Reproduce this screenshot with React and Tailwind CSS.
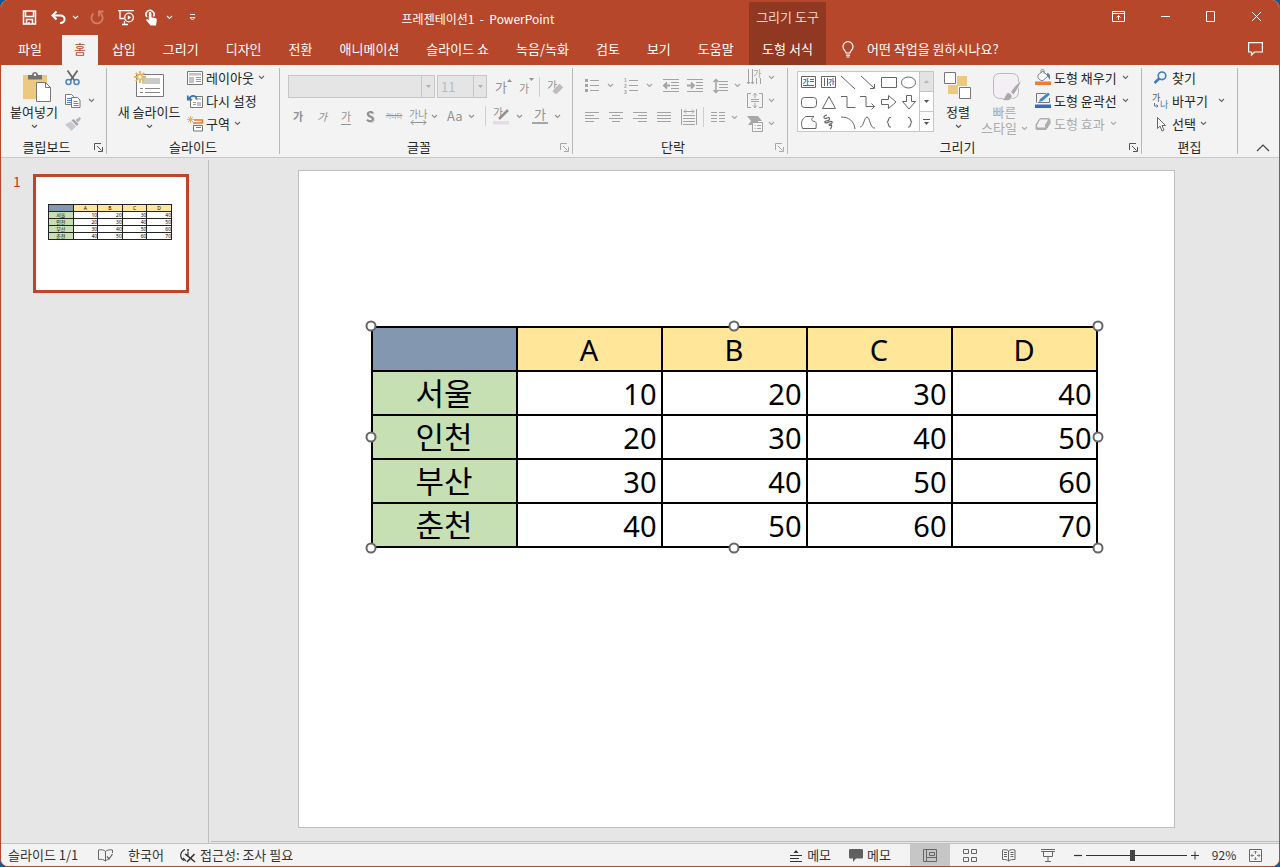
import React from "react";

/* ---------- small drawing helpers ---------- */

function Svg({ w, h, color = "currentColor", sw = 1, className = "", children }) {
  return (
    <svg
      width={w}
      height={h}
      viewBox={`0 0 ${w} ${h}`}
      fill="none"
      stroke={color}
      strokeWidth={sw}
      className={`shrink-0 overflow-visible ${className}`}
      aria-hidden="true"
    >
      {children}
    </svg>
  );
}

const Chevron = ({ className = "" }) => (
  <Svg w={7} h={5} className={className} sw={1.1}>
    <path d="M1 1l2.500 2.500L6 1" />
  </Svg>
);

const Launcher = ({ dim }) => (
  <button
    type="button"
    aria-label="대화 상자 열기"
    className={`flex h-[10px] w-[14px] items-center pl-[2px] ${dim ? "text-[#a8a8a8]" : "text-[#555]"}`}
  >
    <Svg w={9} h={9}>
      <path d="M.5 7V.5H7M3 3l4.500 4.500M8.500 4v4.500H4" />
    </Svg>
  </button>
);

function Group({ label, launcher, dim, className = "", children }) {
  return (
    <section aria-label={label} className="flex">
      <div className={`flex flex-col ${className}`}>
        <div className="flex h-[69px]">{children}</div>
        <div className="flex h-[21px] items-center pt-[3px]">
          <span className="flex-1 text-center text-[13px] leading-[16px]">{label}</span>
          {launcher && <Launcher dim={dim} />}
        </div>
      </div>
      <div className="mt-[2px] h-[86px] w-px bg-[#b8b8b8]" />
    </section>
  );
}

function Tool({ label, className = "", children }) {
  return (
    <button type="button" aria-label={label} className={`flex items-center ${className}`}>
      {children}
    </button>
  );
}

const Separator = ({ className = "" }) => <div className={`h-[20px] w-px bg-[#cfcfcf] ${className}`} />;

/* ---------- title bar ---------- */

function QuickAccess() {
  return (
    <div className="flex h-[34px] w-[206px] items-center pl-[21px] text-white">
      <Tool label="저장" className="w-[29px]">
        <Svg w={15} h={15} sw={1.5}>
          <path d="M1.500 1h12v13h-12zM3.500 1v5.500h8V1" />
          <path d="M4.500 14v-4.500h6V14M7 12v2" />
        </Svg>
      </Tool>
      <Tool label="실행 취소" className="w-[39px] gap-[6px]">
        <Svg w={15} h={15} sw={2}>
          <path d="M5.500 1.500L1.500 5.500l4 4M2 5.500h7.500c5.500 0 5.500 7.500-.5 7.500" />
        </Svg>
        <Chevron />
      </Tool>
      <Tool label="다시 실행" className="w-[28px] text-[#d27f68]">
        <Svg w={14} h={15} sw={1.800}>
          <path d="M4.500 2.800a5.600 5.600 0 1 0 6 .7M5 6.500l0-5L.500 1.500" transform="translate(14 0) scale(-1 1)" />
        </Svg>
      </Tool>
      <Tool label="처음부터" className="w-[27px]">
        <Svg w={17} h={17} sw={1.300}>
          <path d="M0 1.700h16M2 2v7.500h4M6.500 12v3.500M4 15.500h6" />
          <circle cx="11" cy="8.500" r="4.300" />
          <path d="M9.800 6.300v4.400l3.400-2.200z" fill="currentColor" stroke="none" />
        </Svg>
      </Tool>
      <Tool label="터치/마우스 모드" className="w-[44px] gap-[8px]">
        <Svg w={13} h={17}>
          <path d="M2 8a4 4 0 1 1 6.500-.5" strokeWidth="1.600" />
          <path
            d="M3.800 4.500c0-1.900 2.600-1.900 2.600 0V8.300l4.200.9c1 .3 1.400 1 1.200 2l-.8 5.400H5.500L1.500 11.500c-.7-1 .5-1.800 1.300-1.200l1 .9z"
            fill="currentColor"
            stroke="none"
          />
        </Svg>
        <Chevron />
      </Tool>
      <Tool label="빠른 실행 도구 모음 사용자 지정">
        <Svg w={7} h={7}>
          <path d="M1 .5h5M1 3.500l2.500 2.500L6 3.500z" />
        </Svg>
      </Tool>
    </div>
  );
}

const TABS = ["삽입", "그리기", "디자인", "전환", "애니메이션", "슬라이드 쇼", "녹음/녹화", "검토", "보기", "도움말"];

function Header() {
  return (
    <header className="flex h-[65px] bg-[#b7472a] text-[13px] leading-[18px] text-white">
      <div className="flex w-[748px] flex-col justify-between">
        <div className="flex items-center">
          <QuickAccess />
          <h1 className="flex-1 whitespace-pre pt-[3px] text-center text-[12px]">
            프레젠테이션1  -  PowerPoint
          </h1>
        </div>
        <nav className="flex h-[30px] gap-px pl-[4px]">
          <button type="button" className="px-[13px] pb-[2px]">파일</button>
          <button type="button" className="ml-[6px] bg-[#f3f3f3] px-[12px] pb-[2px] text-[#b7472a]">홈</button>
          {TABS.map((t) => (
            <button type="button" key={t} className="whitespace-nowrap px-[13px] pb-[2px]">
              {t}
            </button>
          ))}
        </nav>
      </div>
      <div className="mt-[2px] flex w-[77px] flex-col justify-between bg-[#903822] text-center">
        <span className="pt-[6px] text-[#f6d3c7]">그리기 도구</span>
        <button type="button" className="h-[30px] pb-[2px]">도형 서식</button>
      </div>
      <div className="flex flex-1 flex-col justify-between">
        <div className="flex h-[33px] items-center justify-end pr-[17px]">
          <Tool label="리본 메뉴 표시 옵션">
            <Svg w={13} h={11} className="mr-[35px]">
              <path d="M.5.5h12v10H.5zM.5 2.500h12M6.500 9V4.500M4.500 6.500l2-2 2 2" />
            </Svg>
          </Tool>
          <Tool label="최소화">
            <Svg w={11} h={11} className="mr-[34px]"><path d="M1 5.500h9" /></Svg>
          </Tool>
          <Tool label="최대화">
            <Svg w={11} h={11} className="mr-[35px]"><path d="M1.500.5h8v10h-8z" /></Svg>
          </Tool>
          <Tool label="닫기">
            <Svg w={11} h={11}><path d="M1 1l9 9M10 1l-9 9" /></Svg>
          </Tool>
        </div>
        <div className="flex h-[30px] items-center pb-[2px] pl-[16px] pr-[16px]">
          <Svg w={12} h={17} sw={1.200}>
            <path d="M4 12c0-2-3-3-3-6.300a5 5 0 0 1 10 0C11 9 8 10 8 12zM4 14.200h4M4.500 16h3" />
          </Svg>
          <button type="button" className="ml-[13px] flex-1 text-left">어떤 작업을 원하시나요?</button>
          <Tool label="메모">
            <Svg w={15} h={14} sw={1.200}>
              <path d="M.6.6h13.800v9.400H6.500l-3 3v-3H.6z" />
            </Svg>
          </Tool>
        </div>
      </div>
    </header>
  );
}

/* ---------- ribbon groups ---------- */

function ClipboardGroup() {
  return (
    <Group label="클립보드" launcher className="w-[105px]">
      <button type="button" className="flex w-[66px] flex-col items-center pt-[5px]">
        <Svg w={30} h={31} className="ml-[6px]">
          <path d="M1 4h24v24H1z" fill="#edc87e" stroke="none" />
          <path d="M6 4h4c0-4 6-4 6 0h4v4.500H6z" fill="#737373" stroke="none" />
          <circle cx="13" cy="3.800" r="1.200" fill="#fff" stroke="none" />
          <path d="M14.500 11.500h9l5 5v14h-14z" fill="#fff" stroke="#777" />
          <path d="M23.500 11.500v5h5" stroke="#777" />
        </Svg>
        <span className="mt-px text-[13px] leading-[18px]">붙여넣기</span>
        <Chevron className="mt-[3px] text-[#555]" />
      </button>
      <div className="-ml-[2px] flex flex-col text-[#777]">
        <Tool label="잘라내기" className="h-[23px]">
          <Svg w={15} h={16} sw={1.800}>
            <path d="M2.500.5l7 10M12.500.5l-7 10" stroke="#666" />
            <circle cx="3.500" cy="12" r="2.500" stroke="#4a86c5" strokeWidth="1.500" />
            <circle cx="11.500" cy="12" r="2.500" stroke="#4a86c5" strokeWidth="1.500" />
          </Svg>
        </Tool>
        <Tool label="복사" className="h-[23px] gap-[7px]">
          <Svg w={16} h={14} color="#777">
            <path d="M.5.500h6l2 2v8h-8z" fill="#fff" />
            <path d="M2 4.500h4M2 6.500h4M2 8.500h4" stroke="#4a86c5" />
            <path d="M6.500 3.500h6l2.500 2.500v7.500H6.500z" fill="#fff" />
            <path d="M8.500 7.500h4M8.500 9.500h5M8.500 11.500h5" stroke="#4a86c5" />
          </Svg>
          <Chevron />
        </Tool>
        <Tool label="서식 복사" className="h-[23px]">
          <Svg w={16} h={14}>
            <path d="M10.500 3l4-3 1.500 1.500-3 4z" fill="#b3b3b3" stroke="none" />
            <path d="M6.500 3.500l2-1.500 5 5-1.500 2z" fill="#a5a5a5" stroke="none" />
            <path d="M0 7.500l6-3 5 5-4.500 4.500z" fill="#ccc8cf" stroke="none" />
          </Svg>
        </Tool>
      </div>
    </Group>
  );
}

const Spark = () => (
  <g stroke="#e8b458" strokeWidth="1.800">
    <path d="M6 0v12M0 6h12M1.800 1.800l8.400 8.400M10.200 1.800l-8.400 8.400" />
    <circle cx="6" cy="6" r="2.200" fill="#fff" strokeWidth="1" />
  </g>
);

function SlidesGroup() {
  const row = "flex h-[23px] items-center text-[13px] leading-[18px] whitespace-nowrap";
  return (
    <Group label="슬라이드" className="w-[172px]">
      <button type="button" className="flex w-[80px] flex-col items-center whitespace-nowrap pl-[4px] pt-[5px]">
        <Svg w={31} h={28}>
          <path d="M2.500 3.500h27v22h-27z" fill="#fff" stroke="#777" />
          <path d="M8 7h18v6H8z" fill="#c9c9c9" stroke="none" />
          <path d="M6 17.500h3M11 17.500h15M6 21.500h3M11 21.500h15" stroke="#888" />
          <Spark />
        </Svg>
        <span className="mt-[4px] text-[13px] leading-[18px]">새 슬라이드</span>
        <Chevron className="mt-[3px] text-[#555]" />
      </button>
      <div className="flex flex-col">
        <button type="button" className={row}>
          <Svg w={16} h={14} color="#777">
            <path d="M.5.5h15v13H.5z" fill="#fff" />
            <path d="M2 2h12v2.500H2zM2 6h5v6H2z" fill="#c2c2c2" stroke="none" />
            <path d="M9 6.500h5M9 8.500h5M9 10.500h5" stroke="#999" />
          </Svg>
          <span className="ml-[3px]">레이아웃</span>
          <Chevron className="ml-[4px] text-[#666]" />
        </button>
        <button type="button" className={row}>
          <Svg w={16} h={14} color="#777">
            <path d="M3.500 2.500h12v11h-12z" fill="#fff" />
            <path d="M9 5h5M6 8.500h3M6 10.500h3" stroke="#999" />
            <path d="M10 8h4v4h-4z" fill="#c2c2c2" stroke="none" />
            <path d="M9.500 5.500c0-4.500-5.500-5-7.500-.5M.8 1.500v4.200H5" stroke="#3a78b8" strokeWidth="1.800" />
          </Svg>
          <span className="ml-[3px]">다시 설정</span>
        </button>
        <button type="button" className={row}>
          <Svg w={16} h={16} color="#777">
            <path d="M7 4h8.500v3H6" stroke="#e07b2c" strokeWidth="1.500" fill="#fff" />
            <path d="M6.500 9.500h9v5.500h-9zM9 11.500h5" fill="#fff" />
            <path d="M3.500 0v7M0 3.500h7M1 1l5 5M6 1L1 6" stroke="#e8b458" />
          </Svg>
          <span className="ml-[3px]">구역</span>
          <Chevron className="ml-[4px] text-[#666]" />
        </button>
      </div>
    </Group>
  );
}

const DownArrowCell = () => (
  <span className="flex w-[13px] items-center justify-center border-l border-[#c6c6c6] text-[#b0b0b0]">
    <Svg w={5} h={3}><path d="M0 0h5L2.500 3z" fill="currentColor" stroke="none" /></Svg>
  </span>
);

const G = ({ className = "", children }) => (
  <span className={`leading-[16px] ${className}`}>{children}</span>
);

function FontGroup() {
  return (
    <Group label="글꼴" launcher dim className="w-[292px]">
      <div className="flex flex-col pt-[9px] text-[#929292]">
        <div className="flex h-[23px] items-center pl-[8px]">
          <div className="flex h-[23px] w-[147px] border border-[#c6c6c6] bg-[#e5e5e5]">
            <select disabled aria-label="글꼴" className="min-w-0 flex-1 appearance-none"><option></option></select>
            <DownArrowCell />
          </div>
          <div className="ml-[2px] flex h-[23px] w-[50px] border border-[#c6c6c6] bg-[#e5e5e5]">
            <select
              disabled
              aria-label="글꼴 크기"
              defaultValue="11"
              className="min-w-0 flex-1 appearance-none pl-[3px] text-[13px] leading-[20px] text-[#b4bcc4]"
            >
              <option>11</option>
            </select>
            <DownArrowCell />
          </div>
          <Tool label="글꼴 크기 크게" className="ml-[8px] w-[24px]">
            <G className="text-[13px]">가</G>
            <Svg w={5} h={3} className="self-start"><path d="M0 3h5L2.500 0z" fill="currentColor" stroke="none" /></Svg>
          </Tool>
          <Tool label="글꼴 크기 작게" className="w-[20px]">
            <G className="pt-[2px] text-[11px]">가</G>
            <Svg w={5} h={3} className="self-start"><path d="M0 0h5L2.500 3z" fill="currentColor" stroke="none" /></Svg>
          </Tool>
          <Separator />
          <Tool label="서식 모두 지우기" className="ml-[7px]">
            <Svg w={17} h={16}>
              <text x="0" y="11" fontSize="11" fill="currentColor" stroke="none">가</text>
              <path d="M6 11l6.500-6.500 4 4L10 15H8l-2.500-2.500z" fill="#bdbdbd" stroke="#f3f3f3" strokeWidth=".6" />
            </Svg>
          </Tool>
        </div>
        <div className="mt-[8px] flex h-[20px] items-center pl-[6px] text-[11px]">
          <Tool label="굵게" className="w-[24px] justify-center"><G className="font-bold">가</G></Tool>
          <Tool label="기울임꼴" className="w-[24px] justify-center"><G className="italic">가</G></Tool>
          <Tool label="밑줄" className="w-[24px] justify-center"><G className="border-b border-current">가</G></Tool>
          <Tool label="텍스트 그림자" className="w-[24px] justify-center">
            <G className="text-[14px] font-bold text-[#8f8f8f] drop-shadow-[1px_1px_0_#cfcfcf]">S</G>
          </Tool>
          <Tool label="취소선" className="w-[24px] justify-center whitespace-nowrap"><G className="text-[6px] line-through">가나다</G></Tool>
          <Tool label="문자 간격" className="ml-[4px] gap-[4px]">
            <Svg w={17} h={17}>
              <text x="-1" y="10" fontSize="10" fill="currentColor" stroke="none">가나</text>
              <path d="M1 14.500h15M3.500 12L1 14.500 3.500 17M13.500 12l2.500 2.500-2.500 2.500" />
            </Svg>
            <Chevron />
          </Tool>
          <Tool label="대/소문자 바꾸기" className="ml-[9px] gap-[5px]">
            <G className="text-[13px]">Aa</G>
            <Chevron />
          </Tool>
          <Separator className="ml-[10px]" />
          <Tool label="텍스트 강조 색" className="ml-[7px] gap-[6px]">
            <Svg w={17} h={18}>
              <text x="0" y="10" fontSize="11" fill="currentColor" stroke="none">가</text>
              <path d="M15 3L6 12" strokeWidth="2.500" />
              <path d="M0 14h16v3.500H0z" fill="#e3dbe6" stroke="none" />
            </Svg>
            <Chevron />
          </Tool>
          <Tool label="글꼴 색" className="ml-[9px] gap-[6px]">
            <Svg w={16} h={18}>
              <text x="2" y="12" fontSize="13" fill="currentColor" stroke="none">가</text>
              <path d="M0 15h16v2H0z" fill="#a6a6a6" stroke="none" />
            </Svg>
            <Chevron />
          </Tool>
        </div>
      </div>
    </Group>
  );
}

function AlignLines({ d, label }) {
  return (
    <Tool label={label} className="w-[24px]">
      <Svg w={15} h={13}><path d={d} /></Svg>
    </Tool>
  );
}

function ParagraphGroup() {
  return (
    <Group label="단락" launcher dim className="w-[214px]">
      <div className="flex w-[171px] flex-col pl-[12px] pt-[8px] text-[#a3a3a3]">
        <div className="flex h-[23px] items-center">
          <Tool label="글머리 기호" className="w-[39px] gap-[8px]">
            <Svg w={14} h={15} sw={1.200}>
              <path d="M5 2.500h9M5 7.500h9M5 12.500h9" />
              <path d="M0 1h3v3H0zM0 6h3v3H0zM0 11h3v3H0z" fill="currentColor" stroke="none" />
            </Svg>
            <Chevron />
          </Tool>
          <Tool label="번호 매기기" className="w-[39px] gap-[8px]">
            <Svg w={14} h={15} sw={1.200}>
              <path d="M5 2.500h9M5 7.500h9M5 12.500h9" />
              <g fontSize="5" fill="currentColor" stroke="none" fontFamily="Liberation Sans" fontWeight="700">
                <text x="0" y="4">1</text><text x="0" y="10">2</text><text x="0" y="16">3</text>
              </g>
            </Svg>
            <Chevron />
          </Tool>
          <Tool label="목록 수준 줄임" className="w-[24px]">
            <Svg w={16} h={13}>
              <path d="M0 .5h16M8 3.500h8M8 6.500h8M8 9.500h8M0 12.500h16" />
              <path d="M7 6.500H1M4 3.500l-3 3 3 3" strokeWidth="1.800" />
            </Svg>
          </Tool>
          <Tool label="목록 수준 늘림" className="w-[26px]">
            <Svg w={16} h={13}>
              <path d="M0 .5h16M9 3.500h7M9 6.500h7M9 9.500h7M0 12.500h16" />
              <path d="M0 6.500h6M4 3.500l3 3-3 3" strokeWidth="1.800" />
            </Svg>
          </Tool>
          <Tool label="줄 간격" className="gap-[6px]">
            <Svg w={15} h={16} sw={1.200}>
              <path d="M6 3.500h9M6 6.500h9M6 9.500h9M6 12.500h9" />
              <path d="M3 1.500v13M.5 4L3 1.500 5.500 4M.5 12L3 14.500 5.500 12" strokeWidth="1.500" />
            </Svg>
            <Chevron />
          </Tool>
        </div>
        <div className="mt-[10px] flex h-[20px] items-center">
          <AlignLines label="왼쪽 맞춤" d="M0 1.500h14M0 4.500h9M0 7.500h14M0 10.500h9" />
          <AlignLines label="가운데 맞춤" d="M0 1.500h14M3 4.500h8M0 7.500h14M3 10.500h8" />
          <AlignLines label="오른쪽 맞춤" d="M0 1.500h14M5 4.500h9M0 7.500h14M5 10.500h9" />
          <AlignLines label="양쪽 맞춤" d="M0 1.500h14M0 4.500h14M0 7.500h14M0 10.500h14" />
          <Tool label="균등 분할" className="w-[22px]">
            <Svg w={16} h={16}>
              <path d="M.5 0v16M15.500 0v16M2 6.500h12M2 9.500h12M2 12.500h12M2 15.500h12M3 2.500h10M5 .5l-2 2 2 2M11 .5l2 2-2 2" />
            </Svg>
          </Tool>
          <Separator />
          <Tool label="열" className="ml-[7px] gap-[6px]">
            <Svg w={14} h={12}>
              <path d="M0 1.500h6M8 1.500h6M0 4.500h6M8 4.500h6M0 7.500h6M8 7.500h6M0 10.500h6M8 10.500h6" />
            </Svg>
            <Chevron />
          </Tool>
        </div>
      </div>
      <div className="flex flex-col pl-[3px] text-[#a3a3a3]">
        <Tool label="텍스트 방향" className="h-[23px] gap-[5px]">
          <Svg w={16} h={17}>
            <path d="M1.500 0v15M5.500 0v15M9.500 9v6M13.500 9v6M0 13l1.500 2L3 13M4 13l1.500 2L7 13" />
            <text x="6" y="8" fontSize="9" fill="currentColor" stroke="none">가</text>
          </Svg>
          <Chevron />
        </Tool>
        <Tool label="텍스트 맞춤" className="h-[23px] gap-[5px]">
          <Svg w={16} h={15}>
            <path d="M4 .5H.5v14H4M12 .5h3.500v14H12" />
            <path d="M4 6.500h8M4 8.500h8M8 0v5M8 15v-5M6 2.500L8 .5l2 2M6 12.500l2 2 2-2" />
          </Svg>
          <Chevron />
        </Tool>
        <Tool label="SmartArt로 변환" className="h-[23px] gap-[5px]">
          <Svg w={16} h={16}>
            <path d="M0 0h11l4 5h-4v2H5V9H1l3-4z" fill="#a8a8a8" stroke="none" />
            <path d="M5.500 6.500h10v9h-10z" fill="#f7f3f7" />
            <path d="M7.500 9.500h1M10 9.500h4M7.500 12.500h1M10 12.500h4" />
          </Svg>
          <Chevron />
        </Tool>
      </div>
    </Group>
  );
}

const SHAPES = [
  ["텍스트 상자", <g key="a"><path d="M3.500 4.500h14v11h-14zM12 7.500h4M12 9.500h4M5 13.500h11" /><text x="4.500" y="11.500" fontSize="7" fontWeight="700" fill="#2e75b6" stroke="none">가</text></g>],
  ["세로 텍스트 상자", <g key="b"><path d="M3.500 4.500h14v11h-14zM6.500 6v8M9.500 6v8M12.500 12v2" /><text x="10" y="11.500" fontSize="7" fontWeight="700" fill="#2e75b6" stroke="none">가</text></g>],
  ["선", <path key="c" d="M3 4l14 13" />],
  ["화살표", <path key="d" d="M3 4l13 12M16.500 12v4.500H12" />],
  ["직사각형", <path key="e" d="M2.500 5.500h15v10h-15z" />],
  ["타원", <ellipse key="f" cx="9.500" cy="10.500" rx="7" ry="5.500" />],
  ["둥근 직사각형", <rect key="g" x="3.500" y="5.500" width="15" height="10" rx="3" />],
  ["삼각형", <path key="h" d="M4.500 16.500h13L11 4.500z" />],
  ["꺾인 연결선", <path key="i" d="M3 4.500h6v11h8.500" />],
  ["꺾인 화살표", <path key="j" d="M2 4.500h6v10h8.500M13.500 11.500l3 3-3 3" />],
  ["오른쪽 화살표", <path key="k" d="M2.500 7.500h7v-4l7.500 6.500-7.500 6.500v-4h-7z" />],
  ["아래쪽 화살표", <path key="l" d="M7.500 3.500h5v6h4L10 17 3.500 9.500h4z" />],
  ["자유형: 도형", <path key="m" d="M8 4.500h8c-4 3-2 5 1 5 2 1 1 4 1 7H4.500c-2-6-1-9 3.500-12z" />],
  ["자유형: 자유 곡선", <path key="n" d="M9 3c-5 1-3 5 0 3s4 3-1 3c-3 1 0 3 3 1s5 1 1 2c-2 1 0 2 1 1s1 3-1 4" strokeWidth="1.200" />],
  ["호", <path key="o" d="M3 5c8 0 13 4 14 12" />],
  ["곡선", <path key="p" d="M2 15c4 0 4-10 7-10s3 12 8 11" />],
  ["왼쪽 중괄호", <path key="q" d="M12 5.500H11c-2 0-1 4-3 4.500 2 .5 1 5 3 5h1" strokeWidth="1.200" />],
  ["오른쪽 중괄호", <path key="r" d="M9 5.500h1c2 0 1 4 3 4.500-2 .5-1 5-3 5H9" strokeWidth="1.200" />],
];

function DrawingGroup() {
  const row = "flex h-[23px] items-center text-[13px] leading-[18px] whitespace-nowrap";
  return (
    <Group label="그리기" launcher className="w-[353px]">
      <div className="ml-[9px] mt-[5px] flex h-[61px] w-[137px] border border-[#c6c6c6] bg-white">
        <div className="grid flex-1 grid-cols-6 text-[#666]">
          {SHAPES.map(([name, shape]) => (
            <button type="button" aria-label={name} key={name} className="h-[20px]">
              <Svg w={20} h={20}>{shape}</Svg>
            </button>
          ))}
        </div>
        <div className="flex w-[14px] flex-col border-l border-[#c6c6c6] text-[#555]">
          <button type="button" aria-label="위로" className="flex flex-1 items-center justify-center bg-[#e3e3e3] text-[#b5b5b5]">
            <Svg w={5} h={3}><path d="M0 3h5L2.500 0z" fill="currentColor" stroke="none" /></Svg>
          </button>
          <button type="button" aria-label="아래로" className="flex flex-1 items-center justify-center border-y border-[#c6c6c6]">
            <Svg w={5} h={3}><path d="M0 0h5L2.500 3z" fill="currentColor" stroke="none" /></Svg>
          </button>
          <button type="button" aria-label="자세히" className="flex flex-1 items-center justify-center">
            <Svg w={7} h={6}><path d="M0 .5h7" /><path d="M1 3h5L3.500 6z" fill="currentColor" stroke="none" /></Svg>
          </button>
        </div>
      </div>
      <button type="button" className="flex w-[48px] flex-col items-center pt-[5px]">
        <Svg w={28} h={29}>
          <path d="M13 5h10v10h-9v8H4V14h9z" fill="#edc87e" stroke="none" />
          <path d="M.5 1.500h11v11H.5zM15.500 16.500h11v11h-11z" fill="#fff" stroke="#777" />
        </Svg>
        <span className="mt-[3px] text-[13px] leading-[18px]">정렬</span>
        <Chevron className="mt-[3px] text-[#555]" />
      </button>
      <button type="button" className="flex w-[45px] flex-col items-center pt-[6px] text-[13px] leading-[16px] text-[#ababab]">
        <Svg w={30} h={30} className="ml-[4px]">
          <rect x="1.500" y="1.500" width="25" height="25" rx="6" fill="#f4eff5" stroke="#b9b9b9" />
          <path d="M29.500 8c-5 4-9 9-11 12l3 3c3-4 7-10 8-15z" fill="#a9a9a9" stroke="#f3f3f3" />
          <path d="M17 20.500c-4 0-3 5-7 7.500 5 2 11 0 10-5z" fill="#a9a9a9" stroke="#f3f3f3" />
        </Svg>
        <span className="mt-[2px]">빠른</span>
        <span className="flex items-center gap-[4px] whitespace-nowrap">
          스타일 <Chevron />
        </span>
      </button>
      <div className="ml-[8px] flex flex-col">
        <button type="button" className={row}>
          <Svg w={17} h={17}>
            <path d="M0 12.500h16V16H0z" fill="#ed7d31" stroke="none" />
            <path d="M3 6l5-4 5 5-5 4.500H6L3 9z" fill="#fff" stroke="#888" />
            <path d="M6 4V1.500c0-1.500 3-1.500 3 0V5" stroke="#888" />
            <path d="M12 4c3 0 3.500 3 3 7-1-2-2-3-3-3.500z" fill="#4a86c5" stroke="none" />
          </Svg>
          <span className="ml-[2px]">도형 채우기</span>
          <Chevron className="ml-[5px] text-[#666]" />
        </button>
        <button type="button" className={row}>
          <Svg w={17} h={17}>
            <path d="M0 12.500h16V16H0z" fill="#3a66c4" stroke="none" />
            <path d="M11 1.500H1.500v9M14.500 6v4.500H3" stroke="#777" />
            <path d="M4 10l1-3 8-6.500 2 2L7.500 9z" fill="#4a86c5" stroke="none" />
          </Svg>
          <span className="ml-[2px]">도형 윤곽선</span>
          <Chevron className="ml-[5px] text-[#666]" />
        </button>
        <button type="button" className={`${row} text-[#ababab]`}>
          <Svg w={17} h={14}>
            <path d="M1 7.500L5 1.500h8c1.500 0 2 .5 2 2v3l-4 6H3c-2 0-2.500-.5-2-2z" fill="#adadad" />
            <path d="M1.500 8L5 2h9l-3.500 6v3H2z" fill="#f3eff4" stroke="#b0b0b0" />
          </Svg>
          <span className="ml-[2px]">도형 효과</span>
          <Chevron className="ml-[5px]" />
        </button>
      </div>
    </Group>
  );
}

function EditingGroup() {
  const row = "flex h-[23px] items-center text-[13px] leading-[18px] whitespace-nowrap";
  return (
    <Group label="편집" className="w-[95px]">
      <div className="ml-[11px] flex flex-col">
        <button type="button" className={row}>
          <Svg w={16} h={13} sw={1.600}>
            <circle cx="9" cy="4.800" r="3.800" stroke="#3f7cbc" />
            <path d="M6.200 7.500L1.500 12" stroke="#3f7cbc" strokeWidth="2.500" />
          </Svg>
          <span className="ml-[3px]">찾기</span>
        </button>
        <button type="button" className={row}>
          <Svg w={16} h={16}>
            <text x="-1" y="8" fontSize="9" fill="#555" stroke="none">가</text>
            <text x="7" y="15" fontSize="9" fill="#3f7cbc" stroke="none">나</text>
            <path d="M1.500 10v3H5M3.500 11.500L5 13l-1.500 1.500" stroke="#3f7cbc" />
          </Svg>
          <span className="ml-[3px]">바꾸기</span>
          <Chevron className="ml-[10px] text-[#666]" />
        </button>
        <button type="button" className={row}>
          <Svg w={16} h={16}>
            <path d="M4.500 1.500v11l2.500-2.500 2 5 2-1-2-4.500h3.500z" fill="#fff" stroke="#666" />
          </Svg>
          <span className="ml-[3px]">선택</span>
          <Chevron className="ml-[4px] text-[#666]" />
        </button>
      </div>
    </Group>
  );
}

/* ---------- slide content ---------- */

const COLUMNS = ["A", "B", "C", "D"];
const ROWS = [
  ["서울", 10, 20, 30, 40],
  ["인천", 20, 30, 40, 50],
  ["부산", 30, 40, 50, 60],
  ["춘천", 40, 50, 60, 70],
];

function CityTable({ mini }) {
  const line = mini ? "border border-[#222]" : "border-2 border-black";
  const rowH = mini ? "h-[7px]" : "h-[44px]";
  const latin = mini
    ? "p-0 font-['Noto_Sans'] text-[5px] leading-[6px]"
    : "p-0 pt-[2px] font-['Noto_Sans',sans-serif] text-[29px] leading-[36px]";
  const hangul = mini ? "p-0 text-[5px] leading-[6px]" : "p-0 pb-[2px] text-[31px] leading-[36px]";
  return (
    <table className="w-full table-fixed border-collapse font-normal text-black">
      <thead>
        <tr className={rowH}>
          <th aria-label="도시" className={`${line} bg-[#8497b0] p-0`}></th>
          {COLUMNS.map((c) => (
            <th key={c} scope="col" className={`${line} ${latin} bg-[#ffe699] font-normal`}>{c}</th>
          ))}
        </tr>
      </thead>
      <tbody>
        {ROWS.map(([city, ...values]) => (
          <tr key={city} className={rowH}>
            <th scope="row" className={`${line} ${hangul} bg-[#c6e0b4] font-normal`}>{city}</th>
            {values.map((v, i) => (
              <td key={i} className={`${line} ${latin} text-right ${mini ? "" : "pr-[4px]"}`}>{v}</td>
            ))}
          </tr>
        ))}
      </tbody>
    </table>
  );
}

const HANDLES = [
  "left-0 top-0",
  "left-1/2 top-0",
  "left-full top-0",
  "left-0 top-1/2",
  "left-full top-1/2",
  "left-0 top-full",
  "left-1/2 top-full",
  "left-full top-full",
];

/* ---------- status bar ---------- */

function StatusBar() {
  return (
    <footer className="flex h-[23px] items-center border-t border-[#c2c2c2] bg-[#f3f3f3] text-[12px] leading-[16px] whitespace-nowrap text-[#333]">
      <button type="button" className="ml-[7px] w-[90px] text-left text-[13px]">슬라이드 1/1</button>
      <Tool label="맞춤법 검사" className="w-[30px] text-[#666]">
        <Svg w={15} h={13}>
          <path d="M7.500 2.500C5.500.500 3 .5.500 1v9.500c3-.5 5 0 7 1.500 1-1 2-1.500 3-1.500M7.500 2.500V12M7.500 2.500C9 1 11 .5 14.500 1v3" />
          <path d="M9 7.500l2 2.500 3.500-5" strokeWidth="1.300" />
        </Svg>
      </Tool>
      <button type="button" className="w-[52px] text-left text-[13px]">한국어</button>
      <button type="button" className="flex items-center gap-[3px]">
        <Svg w={17} h={15} sw={1.200}>
          <path d="M5 1.500C-.5 4-.5 10 4 12.500" />
          <path d="M8 3.500v4M5 6l3 2M3 10l3 3" />
          <circle cx="8" cy="2" r="1" fill="currentColor" stroke="none" />
          <path d="M6 6.500l9 7.500M14.500 6L7 14" strokeWidth="1.600" />
        </Svg>
        <span className="text-[13px]">접근성: 조사 필요</span>
      </button>
      <div className="flex h-full flex-1 items-center justify-end">
        <button type="button" className="mr-[18px] flex items-center gap-[4px] text-[13px]">
          <Svg w={14} h={13}>
            <path d="M1 6.500h12M1 9.500h9M1 12.500h12" />
            <path d="M4.500 4L7 1l2.500 3z" fill="currentColor" stroke="none" />
          </Svg>
          메모
        </button>
        <button type="button" className="mr-[19px] flex items-center gap-[4px] text-[13px]">
          <Svg w={14} h={13}>
            <path d="M0 1.500C0 .500.500 0 1.500 0h11c1 0 1.500.5 1.500 1.500V8c0 1-.5 1.500-1.500 1.500H7L4 13V9.500H1.500C.500 9.500 0 9 0 8z" fill="#606060" stroke="none" />
          </Svg>
          메모
        </button>
        <Tool label="기본" className="h-full w-[40px] justify-center bg-[#c6c6c6] text-[#666]">
          <Svg w={14} h={13}>
            <path d="M.5.5h13v12H.5zM3.500.500v12M3.500 8.500h10M6.500 3.500h5v3h-5z" />
          </Svg>
        </Tool>
        <Tool label="여러 슬라이드" className="w-[39px] justify-center text-[#666]">
          <Svg w={14} h={13}><path d="M.5.5h5v4h-5zM8.500.5h5v4h-5zM.5 8.500h5v4h-5zM8.500 8.500h5v4h-5z" /></Svg>
        </Tool>
        <Tool label="읽기용 보기" className="w-[40px] justify-center text-[#666]">
          <Svg w={14} h={13}>
            <path d="M6.500 2C5 .500 3 .500.500 1v9.500c2.500 0 4.500 0 6 1.500 1.500-1.500 4-1.500 6.500-1.500V1C10.500.5 8 .5 6.500 2zM6.500 2v10M2 3.500h3M2 5.500h3M2 7.500h3M8.500 3.500h3M8.500 5.500h3M8.500 7.500h3" />
          </Svg>
        </Tool>
        <Tool label="슬라이드 쇼" className="w-[38px] justify-center text-[#666]">
          <Svg w={14} h={13}><path d="M0 .5h14M0 2.500h14M2.500 2.500v5h9v-5M7 8v4M4 12.500h6" /></Svg>
        </Tool>
        <Tool label="축소" className="ml-[7px]"><Svg w={8} h={9} sw={1.200}><path d="M0 4.500h8" /></Svg></Tool>
        <input
          type="range"
          aria-label="확대/축소"
          min="0"
          max="100"
          defaultValue="46"
          className="mx-[4px] h-[12px] w-[101px] appearance-none bg-[linear-gradient(#333,#333)] bg-[length:100%_1px] bg-center bg-no-repeat [&::-webkit-slider-thumb]:h-[11px] [&::-webkit-slider-thumb]:w-[5px] [&::-webkit-slider-thumb]:appearance-none [&::-webkit-slider-thumb]:bg-[#444]"
        />
        <Tool label="확대"><Svg w={8} h={9}><path d="M0 4.500h8M4 .5v8" /></Svg></Tool>
        <button type="button" className="w-[50px] text-center text-[12px]">92%</button>
        <Tool label="창에 맞춤" className="mr-[17px] text-[#666]">
          <Svg w={13} h={13}>
            <path d="M.5.5h12v12H.5z" />
            <path d="M6.500 2v3M5 3.500l1.500-1.500 1.500 1.500M6.500 11V8M5 9.500l1.500 1.500 1.500-1.500M2 6.500h3M3.500 5L2 6.500 3.500 8M11 6.500H8M9.500 5L11 6.500 9.500 8" strokeWidth=".8" />
          </Svg>
        </Tool>
      </div>
    </footer>
  );
}

export default function App() {
  return (
    <div className="min-h-screen bg-[#0c5a9e] font-['Noto_Sans_CJK_KR',sans-serif] text-[#262626]">
      <div className="flex min-h-screen flex-col overflow-hidden rounded-[8px] border-x border-b border-[#b7472a] bg-[#e6e6e6]">
        <Header />
        <div className="flex h-[93px] border-b border-[#c8c8c8] bg-[#f3f3f3] pt-px">
          <ClipboardGroup />
          <SlidesGroup />
          <FontGroup />
          <ParagraphGroup />
          <DrawingGroup />
          <EditingGroup />
          <div className="flex flex-1 items-end justify-end pb-[5px] pr-[9px] text-[#444]">
            <Tool label="리본 메뉴 축소">
              <Svg w={14} h={8} sw={1.200}><path d="M1 7l6-6 6 6" /></Svg>
            </Tool>
          </div>
        </div>
        <div className="flex flex-1">
          <aside className="mt-[2px] flex w-[208px] border-r border-[#bdbdbd]">
            <span className="w-[32px] pt-[12px] text-center text-[14px] leading-[18px] text-[#c0391b]">1</span>
            <button
              type="button"
              aria-label="슬라이드 1"
              className="mt-[14px] flex h-[119px] w-[156px] items-start border-[3px] border-[#bf4528] bg-white pl-[12px] pr-[14px] pt-[27px]"
            >
              <CityTable mini />
            </button>
          </aside>
          <main className="mb-px ml-[2px] flex flex-1 items-start justify-center border-b border-[#bdbdbd] pb-[12px] pl-[2px] pr-[20px] pt-[12px]">
            <div className="aspect-[4/3] w-full max-w-[877px] border border-[#bfbfbf] bg-white pl-[72px] pr-[76px] pt-[155px]">
              <div className="relative w-full">
                <CityTable />
                {HANDLES.map((pos) => (
                  <span
                    key={pos}
                    className={`absolute size-[11px] -translate-x-1/2 -translate-y-1/2 rounded-full border-2 border-[#666] bg-white ${pos}`}
                  />
                ))}
              </div>
            </div>
          </main>
        </div>
        <StatusBar />
      </div>
    </div>
  );
}
